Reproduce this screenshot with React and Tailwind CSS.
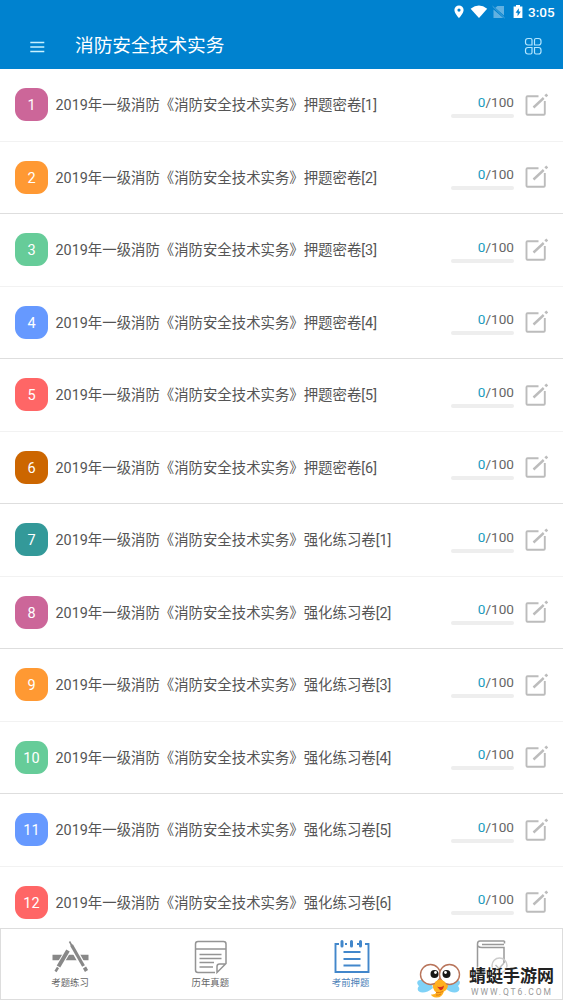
import React from 'react';

const papers = [
  { title: '2019年一级消防《消防安全技术实务》押题密卷[1]', color: 'bg-[#cc6699]' },
  { title: '2019年一级消防《消防安全技术实务》押题密卷[2]', color: 'bg-[#ff9933]' },
  { title: '2019年一级消防《消防安全技术实务》押题密卷[3]', color: 'bg-[#66cc99]' },
  { title: '2019年一级消防《消防安全技术实务》押题密卷[4]', color: 'bg-[#6699ff]' },
  { title: '2019年一级消防《消防安全技术实务》押题密卷[5]', color: 'bg-[#ff6666]' },
  { title: '2019年一级消防《消防安全技术实务》押题密卷[6]', color: 'bg-[#cc6600]' },
  { title: '2019年一级消防《消防安全技术实务》强化练习卷[1]', color: 'bg-[#339999]' },
  { title: '2019年一级消防《消防安全技术实务》强化练习卷[2]', color: 'bg-[#cc6699]' },
  { title: '2019年一级消防《消防安全技术实务》强化练习卷[3]', color: 'bg-[#ff9933]' },
  { title: '2019年一级消防《消防安全技术实务》强化练习卷[4]', color: 'bg-[#66cc99]' },
  { title: '2019年一级消防《消防安全技术实务》强化练习卷[5]', color: 'bg-[#6699ff]' },
  { title: '2019年一级消防《消防安全技术实务》强化练习卷[6]', color: 'bg-[#ff6666]' },
];

const StatusIcons = () => (
  <svg className="w-[70px] h-4" viewBox="0 0 70 16" fill="#fff">
    {/* Location */}
    <path fillRule="evenodd" d="M5 1.5a4.6 4.6 0 0 0-4.6 4.6C.4 9.4 5 14.2 5 14.2s4.6-4.8 4.6-8.1A4.6 4.6 0 0 0 5 1.5Zm0 3a1.6 1.6 0 1 1 0 3.2 1.6 1.6 0 0 1 0-3.2Z" />
    {/* Wifi */}
    <path d="M16.6 4.7Q25 -1.5 33.2 4.7L25 14Z" />
    {/* No SIM */}
    <g opacity="0.38">
      <path d="M43.5 2H50v9.5L41.3 3.8ZM39.5 5.5 49.2 14h-9.7Z" />
      <path d="m38.6 2.2 12 11.8" stroke="#fff" strokeWidth="0.8" />
    </g>
    {/* Battery */}
    <path fillRule="evenodd" d="M62 1h4v1.5h2.4V14h-8.8V2.5H62ZM64.8 4.2 61.6 8.8h2v3.5l3.2-4.8h-2Z" />
  </svg>
);

const Header = () => (
  <header className="h-[69px] shrink-0 bg-[#0082cf] text-white">
    <div className="flex h-6 items-center justify-end gap-1 pr-[7px]">
      <StatusIcons />
      <span className="w-[28px] whitespace-nowrap text-[13.5px] font-medium leading-6">3:05</span>
    </div>
    <div className="flex h-[45px] items-center pl-[30px] pr-5">
      <svg className="w-[15px] h-3" viewBox="0 0 15 12" stroke="#c9f2ff" strokeWidth="1.4">
        <path d="M.3 1.5h14M.3 6h14M.3 10.5h14" />
      </svg>
      <h1 className="ml-[30px] flex-1 pb-px text-[18.7px] leading-6">消防安全技术实务</h1>
      <svg className="w-[19px] h-[19px]" viewBox="0 0 19 19" fill="none" stroke="#b5e6ff" strokeWidth="1.2">
        <path d="M4 1.5h2.5Q8 1.5 8 3v5H4Q1.5 8 1.5 5.5V4Q1.5 1.5 4 1.5ZM12 1.5h2.5Q17 1.5 17 4v1.5Q17 8 14.5 8h-4V3q0-1.5 1.5-1.5ZM4 10.5h4v5Q8 17 6.5 17H4q-2.5 0-2.500-2.500V13q0-2.500 2.500-2.500ZM10.500 10.500h4q2.500 0 2.500 2.500v1.500q0 2.500-2.500 2.500H12q-1.500 0-1.500-1.500Z" />
      </svg>
    </div>
  </header>
);

const EditIcon = () => (
  <svg className="w-6 h-6" viewBox="0 0 24 24" fill="none" stroke="#bcbcbc" strokeWidth="1.9">
    <path d="M14.5 3.2H3.5q-1 0-1 1v16.600q0 1 1 1h16.300q1 0 1-1V8" />
    <path d="m9.500 14.500 10.200-9.500" strokeWidth="2.400" />
    <path d="m21.300 3.300 2-1.800" strokeWidth="2.800" />
  </svg>
);

const PaperRow = ({ index, title, color }) => (
  <li
    className={`flex h-[72.5px] shrink-0 items-center border-b pl-[15px] pr-[15px] ${index % 2 ? 'border-[#dedede]' : 'border-[#f2f2f2]'}`}
  >
    <div className={`flex h-[33px] w-[33px] items-center justify-center rounded-[11px] pt-[3px] text-[14.5px] text-white ${color}`}>
      {index + 1}
    </div>
    <p className="ml-[7.500px] flex-1 whitespace-nowrap pt-[3px] text-[14.4px] text-[#555]">{title}</p>
    <div className="mr-[10px] w-[63px]">
      <p className="pt-px text-right text-[13.6px] leading-[18px] text-[#666]">
        <span className="text-[#1a9cc0]">0</span>/100
      </p>
      <div className="mt-[3px] h-[4px] rounded-full bg-[#eee]" />
    </div>
    <EditIcon />
  </li>
);

const PracticeIcon = () => (
  <svg className="w-10 h-9" viewBox="0 0 40 36" fill="none" stroke="#888">
    <path d="M1.500 18.500h36" strokeWidth="5.500" />
    <path d="M18 10 4.500 32.500M18.500 2.500 35 32" stroke="#fff" strokeWidth="6" />
    <path d="M17 11.500 7.500 27.500" strokeWidth="4" />
    <path d="m7 28.500-2.500 4" strokeWidth="2.500" />
    <path d="m18.500 2.500 2.500 4.500" strokeWidth="1.600" />
    <path d="m20.500 6 12 21" strokeWidth="3.200" />
    <path d="m33.500 28.500 2 3.500" strokeWidth="3.600" />
  </svg>
);

const HistoryIcon = () => (
  <svg className="w-10 h-9" viewBox="0 0 40 36" fill="none" stroke="#949494" strokeWidth="1.5">
    <path d="M24 33.500H7q-2.500 0-2.500-2.500V5Q4.500 2.500 7 2.500h25.500Q35 2.500 35 5v19.500l-9 9V27.500q0-2.500 2.500-2.500H35M4.500 10H35" />
    <path d="M8.500 15.500h22M8.500 19.500h22M8.500 23.500H23M8.500 28H22" />
  </svg>
);

const NotepadIcon = () => (
  <svg className="w-10 h-9" viewBox="0 0 40 36" fill="none" stroke="#4287cb" strokeWidth="1.9">
    <path d="M7 5H3.500v28h33V5H33M13 5h2M18.500 5h2.500M25 5h2" />
    <path d="M10 2.500V7M19.500 2.500V7M28.500 2.500V7" strokeWidth="3" strokeLinecap="round" />
    <path d="M11.500 13h17M11.500 20h17M11.500 26.500h17" />
  </svg>
);

const BookIcon = () => (
  <svg className="w-10 h-9" viewBox="0 0 40 36" fill="none" stroke="#999" strokeWidth="1.5">
    <path d="M32.500 2H8Q5.500 2 5.500 5v27h14.500M32.500 2v2.500M10 5.500h22M6 7q1 1.500 4 1.500h22V24" />
    <circle cx="27.500" cy="26.500" r="7.500" stroke="#ccc" />
    <path d="m23.500 26 3.500 3.500 5-5.500" stroke="#bbb" />
  </svg>
);

const tabs = [
  { label: '考题练习', icon: PracticeIcon },
  { label: '历年真题', icon: HistoryIcon },
  { label: '考前押题', icon: NotepadIcon, active: true },
  { label: '', icon: BookIcon },
];

const TabBar = () => (
  <nav className="relative z-10 grid h-[72px] shrink-0 grid-cols-4 border border-[#ddd] bg-white">
    {tabs.map(({ label, icon: Icon, active }, i) => (
      <div key={i} className="flex flex-col items-center pt-[10px]">
        <Icon />
        <span className={`mr-[2px] mt-[2px] whitespace-nowrap text-[9.4px] leading-3 ${active ? 'text-[#4d82b8]' : 'text-[#666]'}`}>
          {label}
        </span>
      </div>
    ))}
  </nav>
);

const Dragonfly = () => (
  <svg className="w-[46px] h-[36px]" viewBox="0 0 46 36">
    <path d="M15 20C4 15-2 19 3 24c-5 6 5 10 14 2ZM30 20c12-5 17-1 12 4 5 6-5 10-13 2Z" fill="#7fd2f7" />
    <path d="M17 19q7-3 14 0 3 7-3 10.500-2 6.500-8 6-4-.5-5-3 4 .5 5.500-2-5-3-3.500-11.500Z" fill="#ffb01f" />
    <path d="M20 30.500q4 .5 7-1M20 33q3 .5 5-1" fill="none" stroke="#df7b13" />
    <circle cx="14.500" cy="12.500" r="10" fill="#fff" stroke="#b8745a" strokeWidth="1.400" />
    <circle cx="33.500" cy="12.500" r="10" fill="#fff" stroke="#b8745a" strokeWidth="1.400" />
    <path d="M19 20q5-5 10 0l2 4q-6 4-12 0Z" fill="#ffb01f" />
    <path d="M21 24.500q4 1.500 7-1-1 5.500-4 4.500Z" fill="#d5301f" />
    <circle cx="18.500" cy="12" r="4" fill="#171717" />
    <circle cx="30.500" cy="12" r="4" fill="#171717" />
    <circle cx="19.500" cy="10.500" r="1.400" fill="#fff" />
    <circle cx="29.500" cy="10.500" r="1.400" fill="#fff" />
  </svg>
);

// Site badge floating over the last tab
const SiteBadge = () => (
  <div className="absolute bottom-[2px] right-[7px] z-20 flex items-end">
    <Dragonfly />
    <div className="ml-[7px] w-[87px] whitespace-nowrap">
      <p className="text-[17px] font-bold leading-[21px] text-[#222] [text-shadow:0_0_2px_white,0_0_2px_white]">蜻蜓手游网</p>
      <p className="pl-[2px] text-[8.5px] leading-[11px] tracking-[1.9px] text-[#999]">WWW.QT6.COM</p>
    </div>
  </div>
);

const App = () => {
  return (
    <div className="relative flex h-[1000px] w-[563px] flex-col overflow-hidden bg-white font-[Roboto,'Noto_Sans_CJK_SC',sans-serif]">
      <Header />
      <ul className="flex h-[859px] shrink-0 flex-col overflow-hidden">
        {papers.map((paper, i) => (
          <PaperRow key={paper.title} index={i} {...paper} />
        ))}
      </ul>
      <TabBar />
      <SiteBadge />
    </div>
  );
};

export default App;
